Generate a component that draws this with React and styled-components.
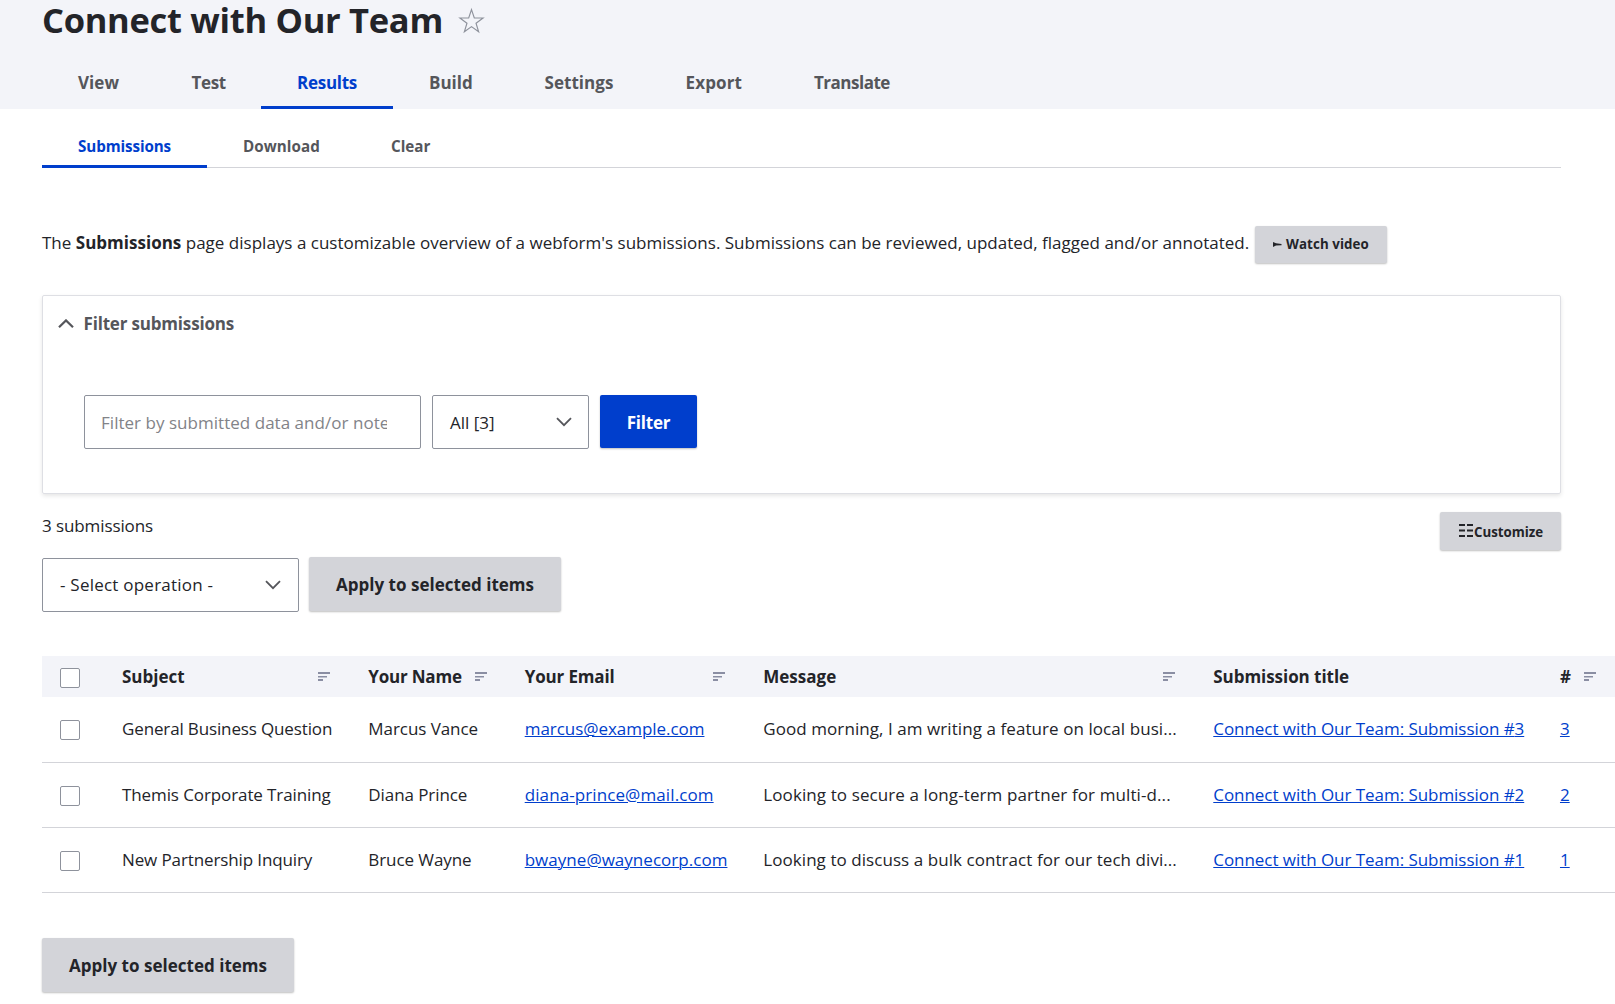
import React from "react";
import styled, { createGlobalStyle } from "styled-components";

const GlobalStyle = createGlobalStyle`
  * {
    box-sizing: border-box;
  }

  body {
    margin: 0;
    background: #fff;
    color: #232429;
    font-family: "Open Sans", "Noto Sans", sans-serif;
    font-size: 17px;
    line-height: 24px;
    overflow: hidden;
  }
`;

const Page = styled.div`
  width: 100vw;
  height: 100vh;
  overflow: hidden;
  white-space: nowrap;
`;

const Header = styled.header`
  height: 109px;
  padding-left: 42px;
  background: #f3f4f9;
`;

const TitleRow = styled.div`
  display: flex;
  height: 55px;
`;

const Title = styled.h1`
  width: 416px;
  margin: 0;
  font-size: 34.5px;
  line-height: 40px;
  letter-spacing: -0.3px;
`;

const StarIcon = styled.svg`
  width: 27px;
  height: 28px;
  margin-top: 7px;
`;

const PrimaryTabs = styled.nav`
  display: flex;
  height: 54px;
`;

const PrimaryTab = styled.a`
  width: ${(props) => props.$width}px;
  padding: 16px 0 0 36px;
  border-bottom: 3px solid ${(props) => (props.$active ? "#003ecc" : "transparent")};
  color: ${(props) => (props.$active ? "#003ecc" : "#55565b")};
  font-weight: 700;
  letter-spacing: ${(props) => props.$ls || 0}px;
`;

const Content = styled.main`
  padding-left: 42px;
`;

const SecondaryTabs = styled.nav`
  display: flex;
  width: 1519px;
  height: 59px;
  padding-top: 20px;
  border-bottom: 1px solid #d3d4d9;
`;

const SecondaryTab = styled(PrimaryTab)`
  height: 39px;
  padding-top: 5px;
  font-size: 15.2px;
`;

const Help = styled.div`
  display: flex;
  height: 127px;
  padding-top: 58px;
`;

const HelpText = styled.p`
  width: 1213px;
  margin: 5px 0 0;
  letter-spacing: ${(props) => props.$ls}px;
`;

const SmallButton = styled.button`
  display: flex;
  align-items: center;
  width: ${(props) => props.$width}px;
  height: ${(props) => props.$height}px;
  padding: ${(props) => props.$pad};
  border: 0;
  border-radius: 2px;
  background: #d3d4d9;
  box-shadow: 0 1px 2px rgba(0, 0, 0, 0.25);
  color: #232429;
  font-family: inherit;
  font-size: 13.3px;
  font-weight: 700;
  letter-spacing: ${(props) => props.$ls || 0}px;
`;

const PlayIcon = styled.svg`
  width: 9px;
  height: 5px;
  margin: 2px 4px 0 0;
`;

const ListIcon = styled.svg`
  width: 14px;
  height: 13px;
  margin: -2px 1px 0 1px;
`;

const Details = styled.section`
  width: 1519px;
  height: 199px;
  border: 1px solid #dedfe4;
  border-radius: 2px;
  box-shadow: 0 2px 4px rgba(0, 0, 0, 0.1);
`;

const Summary = styled.div`
  display: flex;
  align-items: center;
  height: 56px;
  padding-left: 15px;
  color: #55565b;
  font-weight: 700;
  letter-spacing: ${(props) => props.$ls}px;
`;

const Chevron = styled.svg`
  width: 16px;
  height: 10px;
  fill: none;
  stroke: #55565b;
  stroke-width: ${(props) => props.$weight || 1.8};
`;

const SummaryLabel = styled.span`
  margin-left: 9.5px;
`;

const FilterForm = styled.div`
  display: flex;
  gap: 11px;
  padding: 43px 0 0 41px;
`;

const TextField = styled.div`
  width: 337px;
  height: 54px;
  padding: 15px 33px 0 16px;
  border: 1px solid #8e929c;
  border-radius: 2px;
  color: #828388;
`;

const Placeholder = styled.span`
  display: block;
  overflow: hidden;
  letter-spacing: ${(props) => props.$ls}px;
`;

const Select = styled.div`
  display: flex;
  align-items: center;
  justify-content: space-between;
  width: ${(props) => props.$width}px;
  height: 54px;
  padding: 0 ${(props) => props.$end || 17}px 0 17px;
  border: 1px solid #8e929c;
  border-radius: 2px;
  letter-spacing: ${(props) => props.$ls || 0}px;
`;

const SelectValue = styled.span`
  padding-top: ${(props) => props.$top || 0}px;
`;

const Button = styled.button`
  width: ${(props) => props.$width}px;
  height: ${(props) => props.$height}px;
  padding: 1px 0 0;
  border: 0;
  border-radius: 2px;
  background: ${(props) => (props.$primary ? "#003ecc" : "#d3d4d9")};
  box-shadow: 0 1px 2px rgba(0, 0, 0, 0.25);
  color: ${(props) => (props.$primary ? "#fff" : "#232429")};
  font-family: inherit;
  font-size: 17px;
  font-weight: 700;
  letter-spacing: ${(props) => props.$ls || 0}px;
`;

const Info = styled.div`
  display: flex;
  justify-content: space-between;
  width: 1519px;
  height: 63px;
  padding-top: 18px;
`;

const Count = styled.span`
  margin-top: 2px;
  letter-spacing: ${(props) => props.$ls}px;
`;

const BulkActions = styled.div`
  display: flex;
  gap: 10px;
  height: 99px;

  ${Select} {
    margin-top: 1px;
  }
`;

const Table = styled.div`
  width: 1573px;
`;

const Row = styled.div`
  display: grid;
  grid-template-columns: 80px 246.3px 156.4px 238.6px 450px 346.7px 55px;
  align-items: center;
  height: ${(props) => props.$height}px;
  padding-bottom: 1px;
  border-bottom: 1px solid #d3d4d9;
`;

const HeadRow = styled(Row)`
  padding-bottom: 0;
  border-bottom: 0;
  background: #f3f4f9;
  font-weight: 700;
`;

const HeadCell = styled.div`
  display: flex;
  align-items: center;
  justify-content: space-between;
  padding-right: ${(props) => props.$pad}px;
  letter-spacing: ${(props) => props.$ls || 0}px;
`;

const Cell = styled.div`
  letter-spacing: ${(props) => props.$ls || 0}px;
`;

const Link = styled.a`
  color: #003ecc;
  text-decoration: underline;
  text-decoration-thickness: 1px;
  text-underline-offset: 1px;
`;

const Checkbox = styled.span`
  display: block;
  width: 20px;
  height: 20px;
  margin: ${(props) => props.$top}px 0 0 18px;
  border: 1px solid #8e929c;
  border-radius: 2px;
  background: #fff;
`;

const SortIcon = styled.svg`
  width: 12px;
  height: 9px;
  fill: #8a8ea3;
`;

const Footer = styled.div`
  padding-top: 45px;
`;

const Sort = () => (
  <SortIcon viewBox="0 0 12 9">
    <rect width="12" height="2" />
    <rect y="4" width="9" height="1.5" />
    <rect y="7" width="5" height="2" />
  </SortIcon>
);

const ArrowDown = () => (
  <Chevron viewBox="0 0 16 10">
    <path d="M1 1.2 8 8.2 15 1.2" />
  </Chevron>
);

const primaryTabs = [
  { label: "View", width: 113.5, ls: 0.05 },
  { label: "Test", width: 105.5, ls: -0.35 },
  { label: "Results", width: 132, ls: -0.28, active: true },
  { label: "Build", width: 115.5, ls: 0 },
  { label: "Settings", width: 141, ls: 0.04 },
  { label: "Export", width: 128.5, ls: 0.15 },
  { label: "Translate", width: 150, ls: -0.5 },
];

const secondaryTabs = [
  { label: "Submissions", width: 165, ls: -0.1, active: true },
  { label: "Download", width: 148, ls: 0.05 },
  { label: "Clear", width: 110, ls: 0 },
];

const columns = [
  { label: "Subject", pad: 38, ls: 0, sort: true },
  { label: "Your Name", pad: 37.5, ls: -0.2, sort: true },
  { label: "Your Email", pad: 38.3, ls: -0.15, sort: true },
  { label: "Message", pad: 37.8, ls: 0, sort: true },
  { label: "Submission title", pad: 38, ls: -0.05 },
  { label: "#", pad: 19, ls: 0, sort: true },
];

const submissions = [
  {
    id: 3,
    height: 66,
    subject: "General Business Question",
    name: "Marcus Vance",
    email: "marcus@example.com",
    message: "Good morning, I am writing a feature on local busi...",
    ls: [-0.14, -0.06, -0.04, 0.07, -0.05],
  },
  {
    id: 2,
    height: 65,
    subject: "Themis Corporate Training",
    name: "Diana Prince",
    email: "diana-prince@mail.com",
    message: "Looking to secure a long-term partner for multi-d...",
    ls: [-0.1, -0.08, 0.1, 0.1, -0.05],
  },
  {
    id: 1,
    height: 65,
    subject: "New Partnership Inquiry",
    name: "Bruce Wayne",
    email: "bwayne@waynecorp.com",
    message: "Looking to discuss a bulk contract for our tech divi...",
    ls: [-0.12, -0.08, 0.03, 0.06, -0.05],
  },
];

const App = () => {
  return (
    <Page>
      <GlobalStyle />
      <Header>
        <TitleRow>
          <Title>Connect with Our Team</Title>
          <StarIcon viewBox="0 0 28 28" fill="none" stroke="#8e929c" strokeWidth="1.2">
            <path d="M14 2.2 16.9 10.8 26 10.9 18.7 16.3 21.4 25.2 14 19.8 6.6 25.2 9.3 16.3 2 10.9 11.1 10.8Z" />
          </StarIcon>
        </TitleRow>
        <PrimaryTabs>
          {primaryTabs.map((tab) => (
            <PrimaryTab key={tab.label} $width={tab.width} $active={tab.active} $ls={tab.ls}>
              {tab.label}
            </PrimaryTab>
          ))}
        </PrimaryTabs>
      </Header>
      <Content>
        <SecondaryTabs>
          {secondaryTabs.map((tab) => (
            <SecondaryTab key={tab.label} $width={tab.width} $active={tab.active} $ls={tab.ls}>
              {tab.label}
            </SecondaryTab>
          ))}
        </SecondaryTabs>
        <Help>
          <HelpText $ls={0.01}>
            The <b>Submissions</b> page displays a customizable overview of a
            webform's submissions. Submissions can be reviewed, updated, flagged
            and/or annotated.
          </HelpText>
          <SmallButton $width={132} $height={37} $pad="0 0 2px 18px" $ls={0.1}>
            <PlayIcon viewBox="0 0 9 5" fill="#232429">
              <path d="M0 0 3 1.2 8.5 2V3.2L3 3.6 0 5Z" />
            </PlayIcon>
            Watch video
          </SmallButton>
        </Help>
        <Details>
          <Summary $ls={-0.18}>
            <Chevron viewBox="0 0 16 10" $weight={2.2}>
              <path d="M1 8.2 8 1.4 15 8.2" />
            </Chevron>
            <SummaryLabel>Filter submissions</SummaryLabel>
          </Summary>
          <FilterForm>
            <TextField>
              <Placeholder $ls={0.03}>Filter by submitted data and/or notes</Placeholder>
            </TextField>
            <Select $width={157} $end={16}>
              <SelectValue $top={2}>All [3]</SelectValue>
              <ArrowDown />
            </Select>
            <Button $width={97} $height={53} $primary $ls={-0.2}>
              Filter
            </Button>
          </FilterForm>
        </Details>
        <Info>
          <Count $ls={-0.1}>3 submissions</Count>
          <SmallButton $width={121} $height={38} $pad="1px 0 0 18px" $ls={-0.03}>
            <ListIcon viewBox="0 0 14 13" fill="#232429">
              <path d="M0 0H6V2H0ZM8 0H14V2H8ZM0 5.5H6V7.5H0ZM8 5.5H14V7.5H8ZM0 11H6V13H0ZM8 11H14V13H8Z" />
            </ListIcon>
            Customize
          </SmallButton>
        </Info>
        <BulkActions>
          <Select $width={257} $ls={0.23}>
            <SelectValue>- Select operation -</SelectValue>
            <ArrowDown />
          </Select>
          <Button $width={252} $height={54} $ls={0.02}>
            Apply to selected items
          </Button>
        </BulkActions>
        <Table>
          <HeadRow $height={41}>
            <Checkbox $top={3} />
            {columns.map((col) => (
              <HeadCell key={col.label} $pad={col.pad} $ls={col.ls}>
                {col.label}
                {col.sort && <Sort />}
              </HeadCell>
            ))}
          </HeadRow>
          {submissions.map((row) => (
            <Row key={row.id} $height={row.height}>
              <Checkbox $top={2} />
              <Cell $ls={row.ls[0]}>{row.subject}</Cell>
              <Cell $ls={row.ls[1]}>{row.name}</Cell>
              <Cell $ls={row.ls[2]}>
                <Link>{row.email}</Link>
              </Cell>
              <Cell $ls={row.ls[3]}>{row.message}</Cell>
              <Cell $ls={row.ls[4]}>
                <Link>Connect with Our Team: Submission #{row.id}</Link>
              </Cell>
              <Cell>
                <Link>{row.id}</Link>
              </Cell>
            </Row>
          ))}
        </Table>
        <Footer>
          <Button $width={252} $height={54} $ls={0.02}>
            Apply to selected items
          </Button>
        </Footer>
      </Content>
    </Page>
  );
};

export default App;
